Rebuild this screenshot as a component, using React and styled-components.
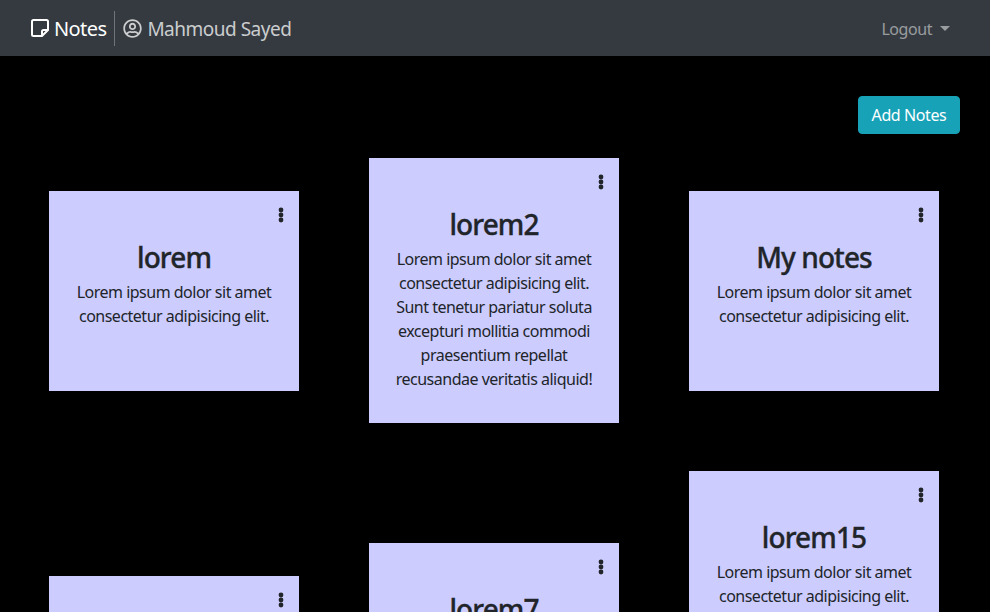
import React from 'react';
import styled, { createGlobalStyle } from 'styled-components';
import { FaRegUserCircle } from 'react-icons/fa';

const GlobalStyle = createGlobalStyle`
  html, body {
    margin: 0;
    height: 100%;
    overflow: hidden;
    background: #000;
    font-family: "Noto Sans", "Open Sans", sans-serif;
    font-size: 16px;
    line-height: 24px;
    color: #212529;
  }
`;

const Navbar = styled.nav`
  height: 56px;
  box-sizing: border-box;
  padding: 0 40px 0 30px;
  background: #343a40;
  display: flex;
  align-items: center;
`;

const Brand = styled.div`
  display: flex;
  align-items: center;
  gap: 4px;
  padding-right: 8px;
  height: 35px;
  border-right: 1px solid rgba(255, 255, 255, 0.3);
  color: #fff;
  font-size: 20px;
  letter-spacing: -0.6px;
`;

const NavText = styled.span`
  padding-top: 2px;
`;

const UserName = styled.div`
  display: flex;
  align-items: center;
  gap: 5px;
  margin-left: 8px;
  color: rgba(255, 255, 255, 0.75);
  font-size: 19px;
  letter-spacing: -0.5px;
`;

const Logout = styled.div`
  margin-left: auto;
  display: flex;
  align-items: center;
  gap: 8px;
  color: rgba(255, 255, 255, 0.5);
  font-size: 16px;
  letter-spacing: -0.45px;
`;

const Caret = styled.span`
  width: 0;
  height: 0;
  border-top: 5px solid currentColor;
  border-left: 5px solid transparent;
  border-right: 5px solid transparent;
`;

const Main = styled.main`
  padding: 40px 30px 0 14px;
`;

const Toolbar = styled.div`
  display: flex;
  justify-content: flex-end;
`;

const AddButton = styled.button`
  width: 102px;
  height: 38px;
  padding: 0;
  border: 1px solid #17a2b8;
  border-radius: 4px;
  background: #17a2b8;
  color: #fff;
  font: inherit;
  letter-spacing: -0.4px;
`;

const NotesGrid = styled.div`
  display: grid;
  grid-template-columns: repeat(3, 320px);
  align-items: center;
`;

const Card = styled.article`
  position: relative;
  box-sizing: border-box;
  width: 250px;
  min-height: 200px;
  margin: 24px auto;
  padding: 49px 16px 32px;
  background: #ccccff;
  text-align: center;
`;

const MenuDots = styled.svg`
  position: absolute;
  top: 16px;
  right: 10px;
  width: 16px;
  height: 16px;
  fill: #212529;
`;

const Title = styled.h3`
  margin: 0 0 6px;
  font-size: 28px;
  font-weight: 500;
  line-height: 34px;
  letter-spacing: -0.9px;
  -webkit-text-stroke: 0.35px #212529;
`;

const Body = styled.p`
  margin: 0;
  letter-spacing: -0.5px;
`;

const short = 'Lorem ipsum dolor sit amet consectetur adipisicing elit.';
const medium = `${short} Sunt tenetur pariatur soluta excepturi mollitia commodi praesentium repellat recusandae veritatis aliquid!`;
const long = `${medium} ${medium}`;

const notes = [
  { title: 'lorem', text: short },
  { title: 'lorem2', text: medium },
  { title: 'My notes', text: short },
  { title: 'lorem5', text: short },
  { title: 'lorem7', text: medium },
  { title: 'lorem15', text: long },
];

const App = () => (
  <>
    <GlobalStyle />
    <Navbar>
      <Brand>
        <svg width="20" height="20" viewBox="0 0 20 20" fill="none" stroke="#fff" strokeWidth="2">
          <path d="M3.500 2h13A1.500 1.500 0 0 1 18 3.500V12l-6 6H3.500A1.500 1.500 0 0 1 2 16.500v-13A1.500 1.500 0 0 1 3.500 2z" />
          <path d="M12 18v-4.500a1.500 1.500 0 0 1 1.500-1.500H18" />
        </svg>
        <NavText>Notes</NavText>
      </Brand>
      <UserName>
        <FaRegUserCircle size={19} />
        <NavText>Mahmoud Sayed</NavText>
      </UserName>
      <Logout>
        <NavText>Logout</NavText>
        <Caret />
      </Logout>
    </Navbar>
    <Main>
      <Toolbar>
        <AddButton>Add Notes</AddButton>
      </Toolbar>
      <NotesGrid>
        {notes.map((note) => (
          <Card key={note.title}>
            <MenuDots viewBox="0 0 16 16">
              <circle cx="8" cy="3" r="2.400" />
              <circle cx="8" cy="8" r="2.400" />
              <circle cx="8" cy="13" r="2.400" />
            </MenuDots>
            <Title>{note.title}</Title>
            <Body>{note.text}</Body>
          </Card>
        ))}
      </NotesGrid>
    </Main>
  </>
);

export default App;
